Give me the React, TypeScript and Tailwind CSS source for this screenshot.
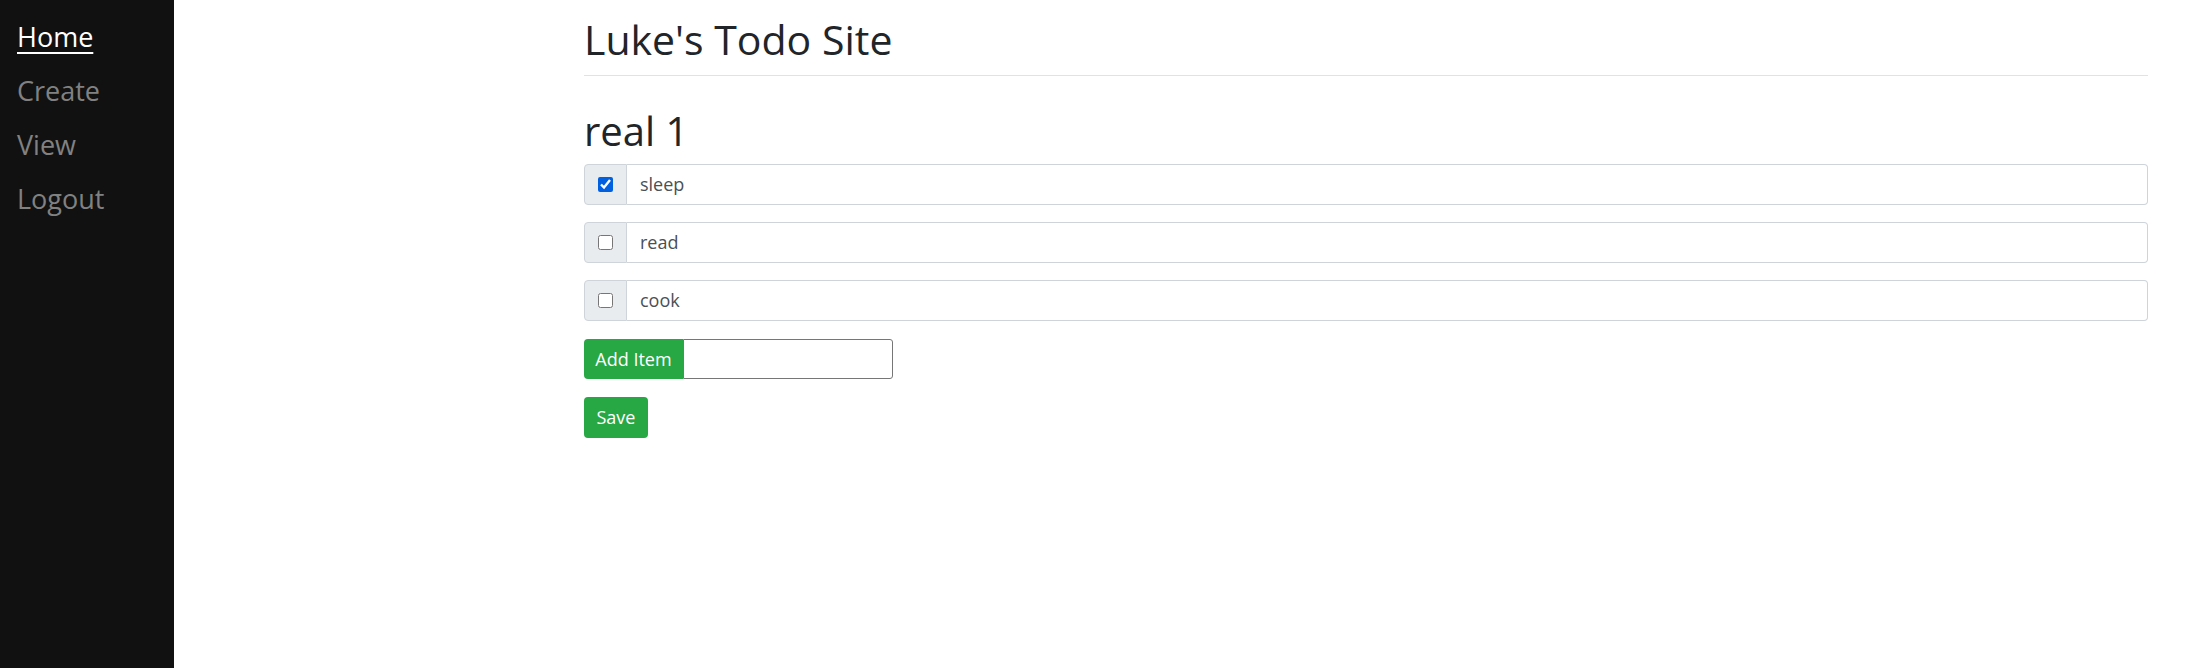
import { useState } from "react";

const links = ["Home", "Create", "View", "Logout"];

export default function App() {
    const [items, setItems] = useState([
        { text: "sleep", done: true },
        { text: "read", done: false },
        { text: "cook", done: false },
    ]);

    const toggle = (i: number) => {
        setItems(items.map((it, idx) => (idx === i ? { ...it, done: !it.done } : it)));
    };

    return (
        <div className="flex min-h-[668px] bg-white font-['Open_Sans',sans-serif]">
            <nav className="w-[174px] shrink-0 bg-[#111111] pt-[10px]">
                {links.map((l, i) => (
                    <a
                        key={l}
                        href="#"
                        className={`block pl-[17px] py-[7px] text-[27px] leading-[40px] ${i === 0 ? "text-white underline underline-offset-[5px] decoration-2" : "text-[#818181]"}`}
                    >
                        {l}
                    </a>
                ))}
            </nav>
            <main className="ml-[410px] w-[1564px] pt-[14px]">
                <h1 className="text-[41px] leading-[50px] text-[#212529] pb-[11px] border-b border-[#e2e2e2]">
                    Luke&apos;s Todo Site
                </h1>
                <h2 className="mt-[31px] text-[40px] leading-[48px] text-[#212529] mb-[9px]">real 1</h2>
                <div className="flex flex-col gap-[17px]">
                    {items.map((it, i) => (
                        <div key={it.text} className="flex h-[41px]">
                            <div className="flex w-[43px] shrink-0 items-center justify-center rounded-l-[4px] border border-[#ced4da] bg-[#e9ecef]">
                                <input
                                    type="checkbox"
                                    checked={it.done}
                                    onChange={() => toggle(i)}
                                    className="m-0 h-[15px] w-[15px] accent-[#0060df]"
                                />
                            </div>
                            <input
                                type="text"
                                value={it.text}
                                readOnly
                                className="min-w-0 flex-1 rounded-r-[4px] border border-l-0 border-[#ced4da] px-[13px] text-[18px] text-[#495057] outline-none"
                            />
                        </div>
                    ))}
                </div>
                <div className="mt-[18px] flex h-[40px] w-[309px]">
                    <button className="w-[99px] shrink-0 rounded-l-[4px] bg-[#28a745] text-[18px] text-white">Add Item</button>
                    <input type="text" className="min-w-0 flex-1 rounded-r-[3px] border border-[#767676] px-2 outline-none" />
                </div>
                <button className="mt-[18px] h-[41px] w-[64px] rounded-[4px] bg-[#28a745] text-[18px] text-white">Save</button>
            </main>
        </div>
    );
}
